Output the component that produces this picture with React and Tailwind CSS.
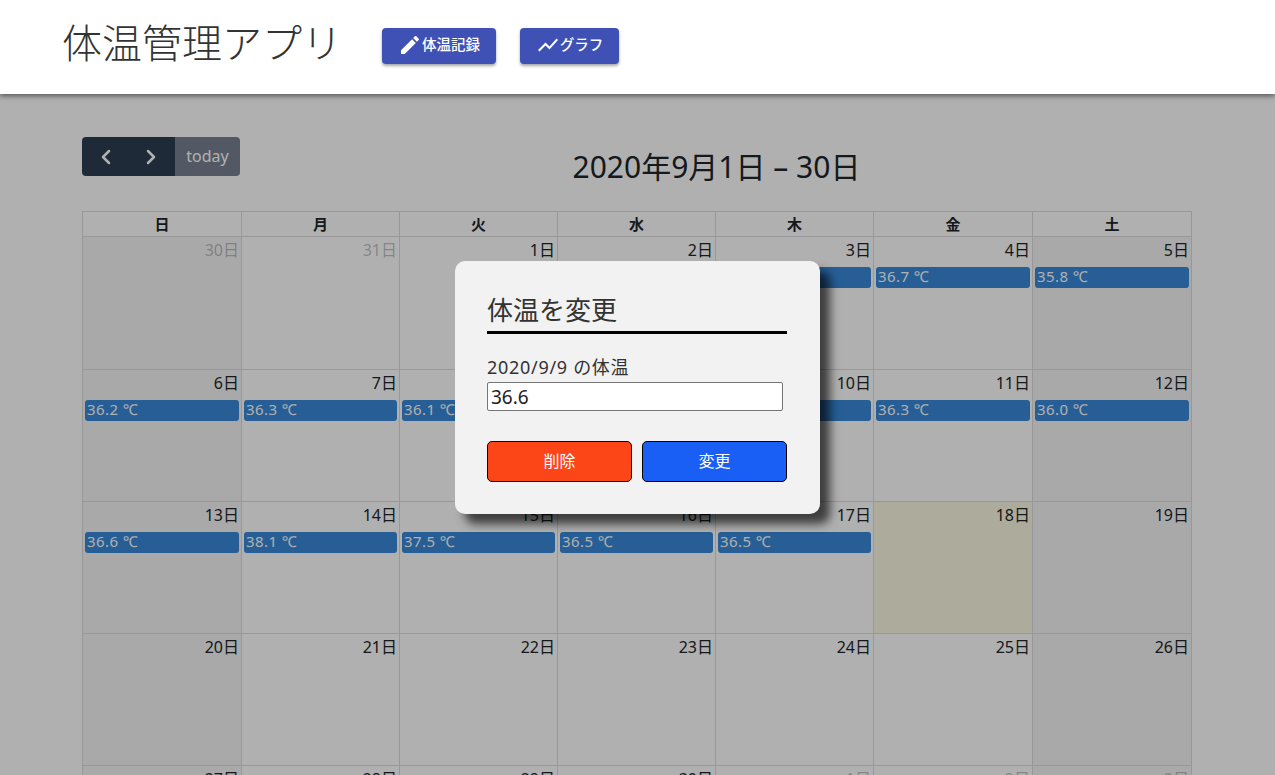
import { ChevronLeft, ChevronRight } from "lucide-react";

const FONT = "font-['Noto_Sans','Noto_Sans_CJK_JP',sans-serif]";

const weekdays = ["日", "月", "火", "水", "木", "金", "土"];
const colWidths = ["w-[159px]", "w-[158px]", "w-[158px]", "w-[158px]", "w-[158px]", "w-[159px]", "w-[159px]"];

/* 5 weeks of September 2020, t = temperature */
const weeks = [
  [{ d: 30, off: true }, { d: 31, off: true }, { d: 1 }, { d: 2 }, { d: 3, t: "36.5" }, { d: 4, t: "36.7" }, { d: 5, t: "35.8" }],
  [{ d: 6, t: "36.2" }, { d: 7, t: "36.3" }, { d: 8, t: "36.1" }, { d: 9, t: "36.6" }, { d: 10, t: "36.4" }, { d: 11, t: "36.3" }, { d: 12, t: "36.0" }],
  [{ d: 13, t: "36.6" }, { d: 14, t: "38.1" }, { d: 15, t: "37.5" }, { d: 16, t: "36.5" }, { d: 17, t: "36.5" }, { d: 18, today: true }, { d: 19 }],
  [{ d: 20 }, { d: 21 }, { d: 22 }, { d: 23 }, { d: 24 }, { d: 25 }, { d: 26 }],
  [{ d: 27 }, { d: 28 }, { d: 29 }, { d: 30 }, { d: 1, off: true }, { d: 2, off: true }, { d: 3, off: true }],
];

function HeaderButton({ icon, label, className }) {
  return (
    <button className={`flex h-9 items-center justify-center rounded bg-[#3f51b5] pb-[2px] text-[14.5px] font-medium text-white shadow-[0_2px_3px_rgba(0,0,0,0.35)] ${className}`}>
      <svg viewBox="0 0 24 24" className="h-6 w-6 fill-white">
        <path d={icon} />
      </svg>
      {label}
    </button>
  );
}

function DayCell({ day, col }) {
  const weekend = col === 0 || col === 6;
  let bg = "";
  if (day.today) bg = "bg-[#fbf8e1]";
  else if (weekend) bg = "bg-[#f5f5f5]";
  return (
    <td className={`border border-[#ddd] p-0 align-top ${bg}`}>
      <div className={`h-[30px] pt-[1px] pr-[2px] text-right text-base ${day.off ? "text-[#212529]/30" : "text-[#212529]"}`}>
        {day.d}日
      </div>
      {day.t && (
        <div className="mx-[2px] h-[21px] rounded-[3px] bg-[#3788d8] pl-[2px] text-[15px] leading-[18px] tracking-[0.4px] text-white">
          {day.t} ℃
        </div>
      )}
    </td>
  );
}

export default function App() {
  return (
    <div className={`relative h-screen overflow-hidden bg-white ${FONT}`}>
      {/* header */}
      <header className="relative z-20 flex h-[94px] items-start bg-white pl-[62px] shadow-[0_2px_5px_rgba(0,0,0,0.5)]">
        <h1 className="mt-[13px] w-[320px] text-[40px] leading-[60px] font-light text-[#333]">体温管理アプリ</h1>
        <div className="mt-7 flex gap-6">
          <HeaderButton
            className="w-[114px]"
            label="体温記録"
            icon="M3 17.25V21h3.75L17.81 9.94l-3.75-3.75L3 17.25zM20.71 7.04c.39-.39.39-1.02 0-1.41l-2.34-2.34c-.39-.39-1.02-.39-1.41 0l-1.83 1.83 3.75 3.75 1.83-1.83z"
          />
          <HeaderButton
            className="w-[99px]"
            label="グラフ"
            icon="M3.5 18.49l6-6.01 4 4L22 6.92l-1.41-1.41-7.09 7.97-4-4L2 16.99z"
          />
        </div>
      </header>

      {/* calendar */}
      <main className="px-[82px] pt-[43px] text-[#212529]">
        <div className="flex h-[74px] items-start justify-between">
          <div className="flex h-[39px] w-[158px] overflow-hidden rounded">
            <div className="flex w-[93px] items-center justify-around bg-[#2c3e50] px-[2px] text-white">
              <ChevronLeft size={24} strokeWidth={2.5} />
              <ChevronRight size={24} strokeWidth={2.5} />
            </div>
            <div className="flex flex-1 items-center justify-center bg-[#778291] pb-[2px] text-base text-white">today</div>
          </div>
          <h2 className="mt-[9px] text-[30px] leading-[42px]">2020年9月1日 – 30日</h2>
          <div />
        </div>

        <table className="w-[1109px] table-fixed border-collapse">
          <colgroup>
            {colWidths.map((w, i) => (
              <col key={i} className={w} />
            ))}
          </colgroup>
          <thead>
            <tr className="h-[25px]">
              {weekdays.map((w) => (
                <th key={w} className="border border-[#ddd] p-0 text-[15px] leading-[24px] font-bold">
                  {w}
                </th>
              ))}
            </tr>
          </thead>
          <tbody>
            {weeks.map((week, i) => (
              <tr key={i} className={i === 0 ? "h-[133px]" : "h-[132px]"}>
                {week.map((day, col) => (
                  <DayCell key={col} day={day} col={col} />
                ))}
              </tr>
            ))}
          </tbody>
        </table>
      </main>

      {/* modal */}
      <div className="absolute inset-0 z-10 flex items-center justify-center bg-black/[0.31]">
        <div className="h-[253px] w-[365px] rounded-[10px] bg-[#f2f2f2] px-8 pt-[30px] text-[#333] shadow-[10px_10px_10px_rgba(0,0,0,0.65)]">
          <h3 className="h-[43px] w-[300px] border-b-[3px] border-black text-[26px] leading-[38px]">体温を変更</h3>
          <div className="mt-[21px] h-[27px] text-lg leading-[24px] tracking-[0.7px]">2020/9/9 の体温</div>
          <input
            readOnly
            value="36.6"
            className="block h-[29px] w-[296px] rounded-[2px] border border-[#767676] bg-white px-[3px] text-[19px] text-[#222] outline-none"
          />
          <div className="mt-[30px] flex w-[300px] gap-[10px]">
            <button className="h-[41px] flex-1 rounded-[5px] border border-black bg-[#fc4618] pb-[2px] text-base text-white">削除</button>
            <button className="h-[41px] flex-1 rounded-[5px] border border-black bg-[#1a5ff5] pb-[2px] text-base text-white">変更</button>
          </div>
        </div>
      </div>
    </div>
  );
}
